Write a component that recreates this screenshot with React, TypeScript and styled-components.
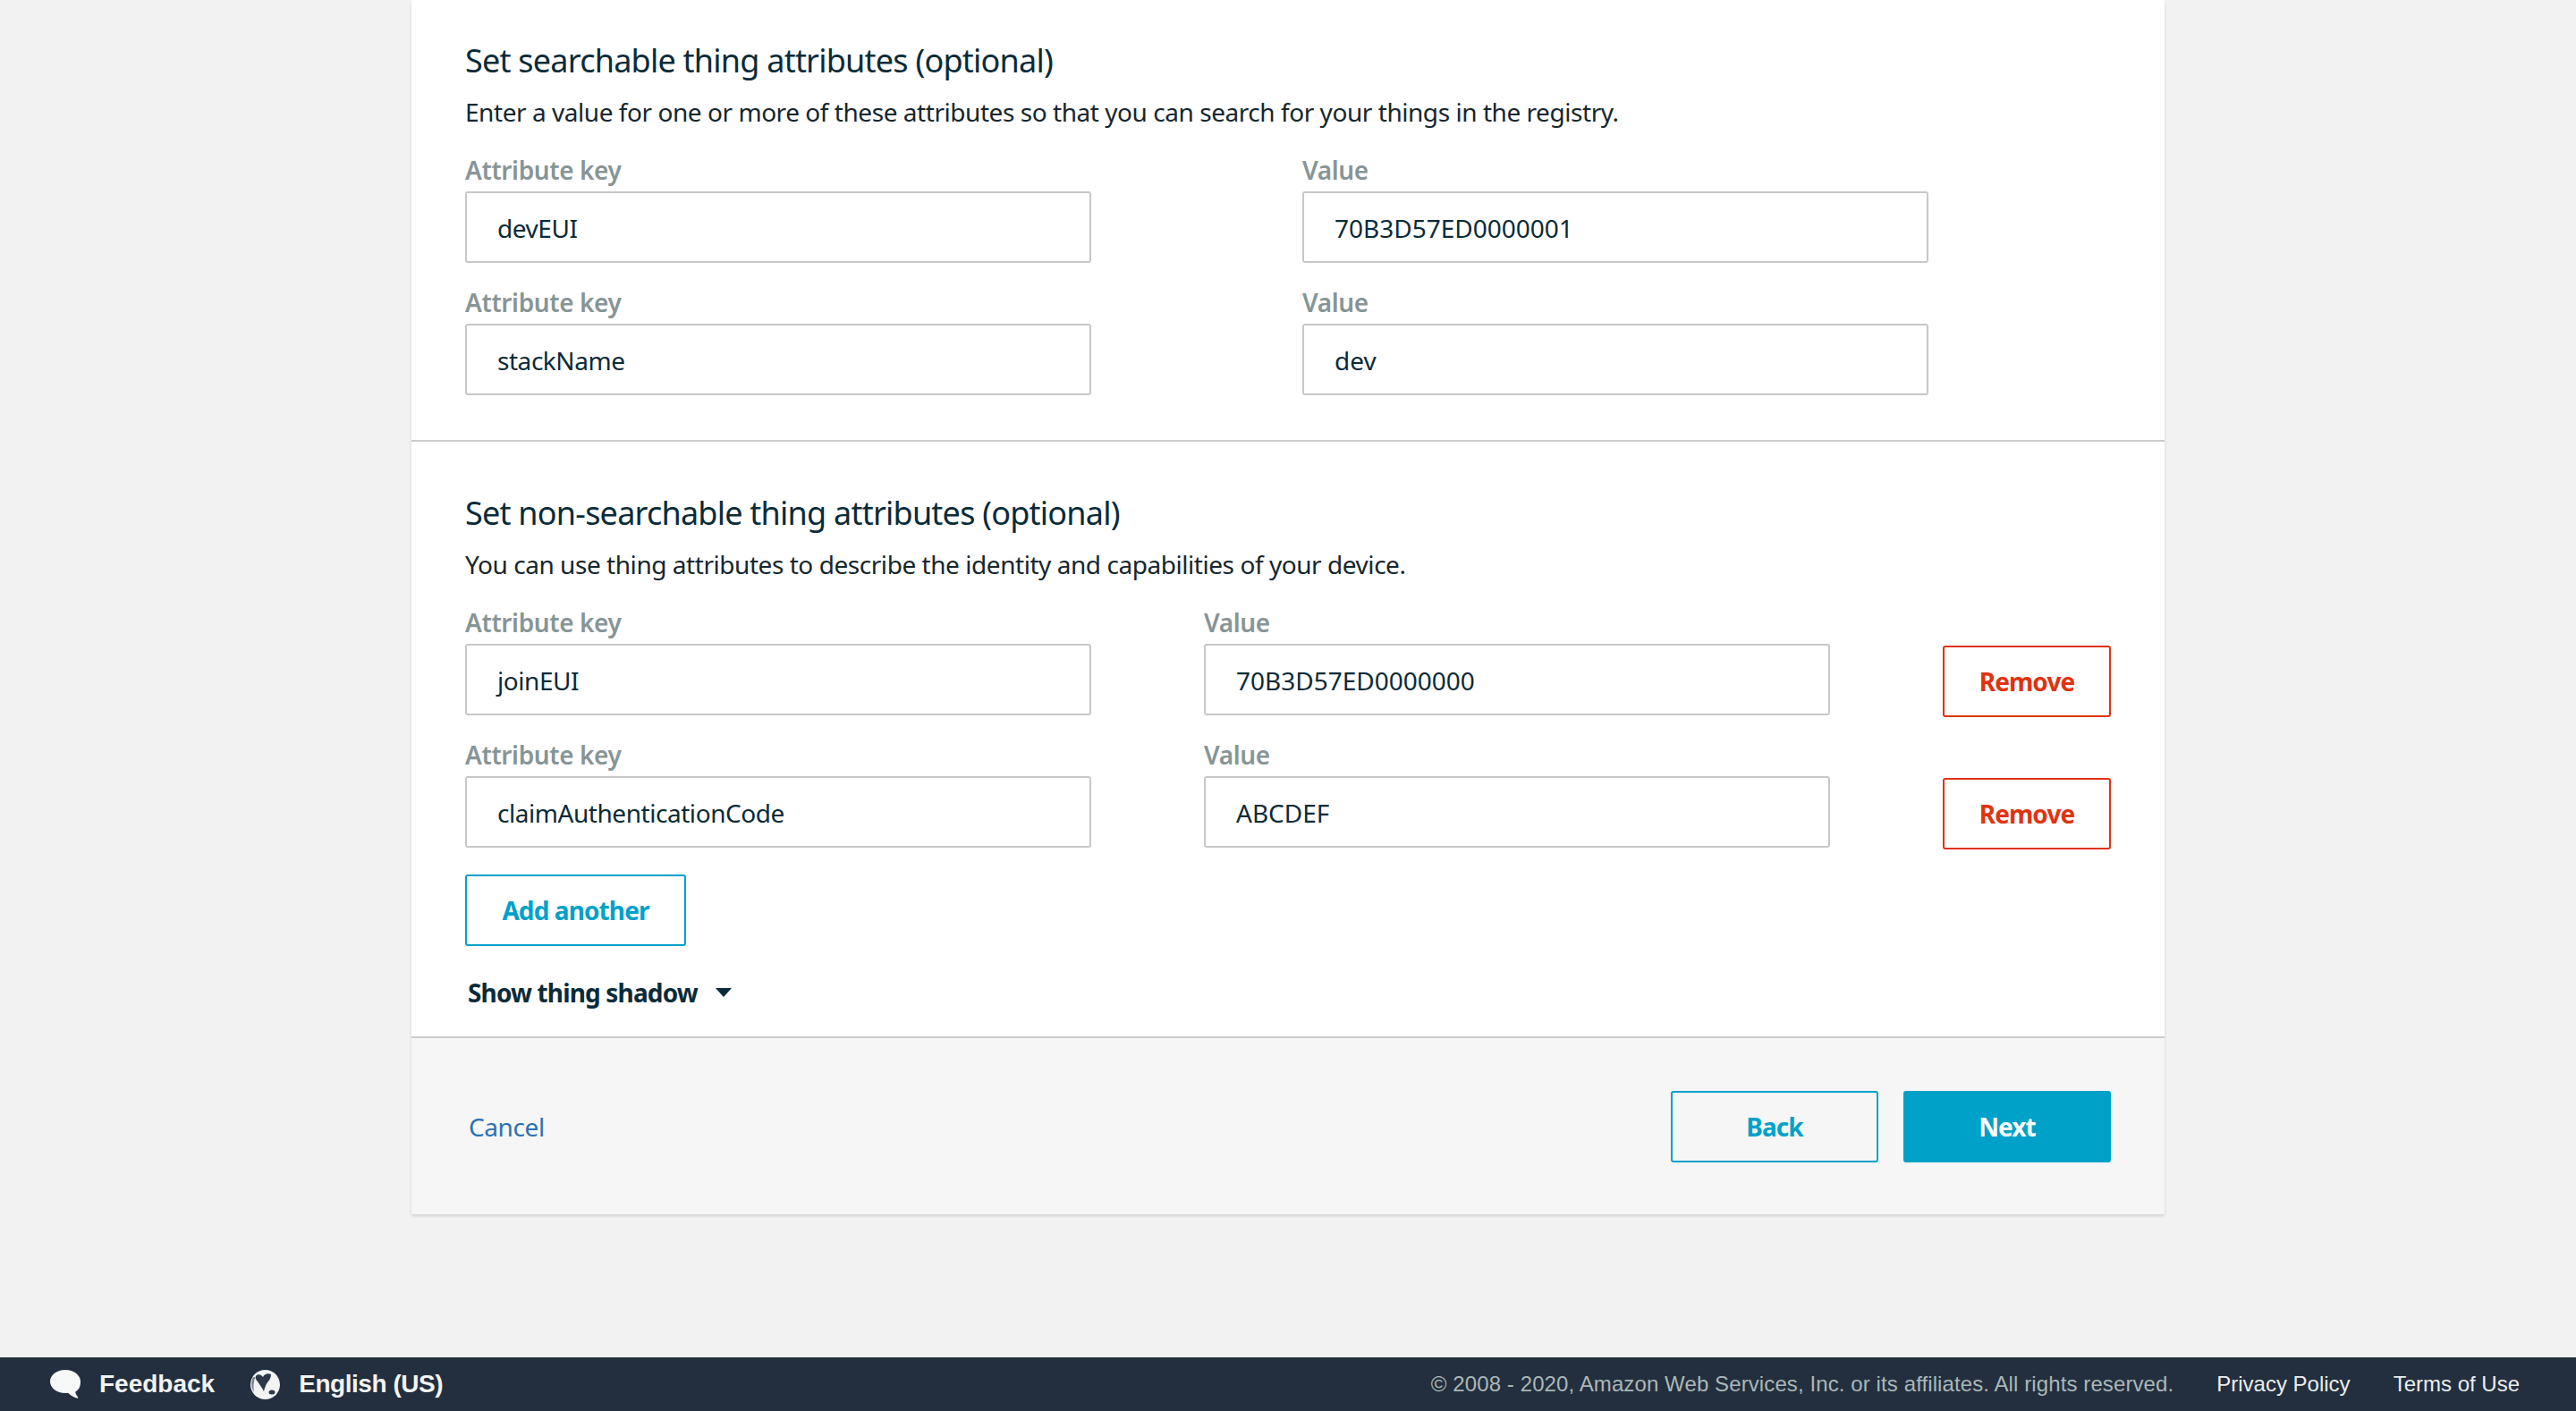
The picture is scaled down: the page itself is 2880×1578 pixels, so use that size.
import styled, { createGlobalStyle } from "styled-components";

const GlobalStyle = createGlobalStyle`
  html, body { margin: 0; padding: 0; background: #f2f2f2; }
  * { box-sizing: border-box; }
`;

const Page = styled.div`
  height: 1578px;
  display: flex;
  flex-direction: column;
  overflow: hidden;
  font-family: "Noto Sans", "Liberation Sans", sans-serif;
  color: #0b2b38;
`;

const Main = styled.main`
  flex: 1;
  display: flex;
  justify-content: center;
  align-items: flex-start;
`;

const Card = styled.div`
  width: 1960px;
  background: #fff;
  box-shadow: 0 2px 3px rgba(0, 28, 36, 0.15);
`;

const Section = styled.section<{ $top: number; $bottom: number }>`
  padding: ${(p) => p.$top}px 60px ${(p) => p.$bottom}px;
  border-bottom: 2px solid #ccc;
`;

const Heading = styled.h2`
  margin: 0;
  font-size: 36px;
  line-height: 46px;
  font-weight: 400;
  letter-spacing: -0.77px;
`;

const Description = styled.p`
  margin: 16px 0 0;
  font-size: 28px;
  line-height: 36px;
  letter-spacing: -0.45px;
  color: #16262e;
`;

const Rows = styled.div<{ $gap: number }>`
  margin-top: 27px;
  display: flex;
  flex-direction: column;
  gap: ${(p) => p.$gap}px;
`;

const Row = styled.div<{ $gap: number }>`
  display: flex;
  gap: ${(p) => p.$gap}px;
  align-items: flex-start;
`;

const FieldGroup = styled.div`
  width: 700px;
`;

const Label = styled.div`
  font-size: 28px;
  line-height: 40px;
  font-weight: 600;
  letter-spacing: -0.4px;
  color: #879596;
  margin-bottom: 4px;
`;

const Field = styled.div`
  height: 80px;
  border: 2px solid #c8c8c8;
  border-radius: 3px;
  background: #fff;
  padding: 2px 34px 0;
  display: flex;
  align-items: center;
  font-size: 28px;
  letter-spacing: -0.45px;
`;

const ValueField = styled(Field)`
  letter-spacing: 0;
`;

const Button = styled.button<{ $kind: "outline" | "danger" | "primary"; $width: number }>`
  width: ${(p) => p.$width}px;
  height: 80px;
  border-radius: 3px;
  border: 2px solid ${(p) => (p.$kind === "danger" ? "#df3312" : "#00a1c9")};
  background: ${(p) => (p.$kind === "primary" ? "#00a1c9" : "transparent")};
  color: ${(p) => (p.$kind === "danger" ? "#df3312" : p.$kind === "primary" ? "#fff" : "#00a1c9")};
  font-family: inherit;
  font-size: 28px;
  font-weight: 700;
  letter-spacing: -0.9px;
  padding: 0;
`;

const RemoveButton = styled(Button)`
  margin-top: 46px;
`;

const AddButton = styled(Button)`
  display: block;
  margin-top: 28px;
`;

const ShadowToggle = styled.div`
  margin-top: 32px;
  margin-left: 3px;
  display: flex;
  align-items: center;
  gap: 20px;
  font-size: 28px;
  line-height: 40px;
  font-weight: 700;
  letter-spacing: -0.85px;
`;

const Caret = styled.span`
  width: 0;
  height: 0;
  border-left: 9px solid transparent;
  border-right: 9px solid transparent;
  border-top: 10px solid #0b2b38;
`;

const CardFooter = styled.div`
  background: #f6f6f6;
  padding: 59px 60px 58px;
  display: flex;
  align-items: center;
  justify-content: space-between;
`;

const CancelLink = styled.a`
  margin-left: 4px;
  font-size: 28px;
  letter-spacing: -0.4px;
  color: #2a72b5;
`;

const Actions = styled.div`
  display: flex;
  gap: 28px;
`;

const BottomBar = styled.footer`
  height: 60px;
  flex-shrink: 0;
  background: #232f3e;
  padding: 0 63px 0 56px;
  display: flex;
  align-items: center;
  justify-content: space-between;
  font-family: "Liberation Sans", Arial, sans-serif;
`;

const BarGroup = styled.div<{ $gap: number }>`
  display: flex;
  align-items: center;
  gap: ${(p) => p.$gap}px;
`;

const BarItem = styled.div<{ $spacing?: number }>`
  display: flex;
  align-items: center;
  gap: 21px;
  font-size: 28px;
  font-weight: 700;
  letter-spacing: ${(p) => p.$spacing ?? 0}px;
  color: #f2f3f3;
`;

const Copyright = styled.span`
  font-size: 24px;
  letter-spacing: 0.1px;
  color: #aab7b8;
`;

const BarLink = styled.a`
  font-size: 24px;
  color: #eaeded;
`;

const BubbleIcon = () => (
  <svg width="34" height="33" viewBox="0 0 34 33">
    <path
      d="M17 0C7.500 0 0 5.800 0 13c0 7 7.500 13 17 13 1 0 2 0 3-.2 2.500 2.400 6 4.800 10.500 6 .8-.2 1-1 .5-1.600-1.400-1.400-2.400-3-2.800-5.600C33 21.800 34 17.800 34 13 34 5.800 26.500 0 17 0z"
      fill="#f7f8f8"
    />
  </svg>
);

const GlobeIcon = () => (
  <svg width="33" height="33" viewBox="0 0 33 33">
    <circle cx="16.5" cy="16.500" r="16.500" fill="#f2f3f3" />
    <path
      d="M6 7C8 4 12 5 14 8c1-3 6-5 9-3 0 4-2 7-4 9-2 3-3 6-4 10-2-4-5-8-7-11C6 11 5 9 6 7z"
      fill="#2b3848"
    />
    <ellipse cx="24" cy="25" rx="3.500" ry="2.500" fill="#2b3848" />
    <path d="M2.500 9C.5 14 .8 20 4 25c-.8-5-.8-11 1.200-16.500C4 7.800 3 8 2.500 9z" fill="#7b8590" />
  </svg>
);

const searchable = [
  { key: "devEUI", value: "70B3D57ED0000001" },
  { key: "stackName", value: "dev" },
];

const nonSearchable = [
  { key: "joinEUI", value: "70B3D57ED0000000" },
  { key: "claimAuthenticationCode", value: "ABCDEF" },
];

export default function App() {
  return (
    <Page>
      <GlobalStyle />
      <Main>
        <Card>
          <Section $top={45} $bottom={50}>
            <Heading>Set searchable thing attributes (optional)</Heading>
            <Description>
              Enter a value for one or more of these attributes so that you can search for your things in the registry.
            </Description>
            <Rows $gap={24}>
              {searchable.map((row) => (
                <Row $gap={236} key={row.key}>
                  <FieldGroup>
                    <Label>Attribute key</Label>
                    <Field>{row.key}</Field>
                  </FieldGroup>
                  <FieldGroup>
                    <Label>Value</Label>
                    <ValueField>{row.value}</ValueField>
                  </FieldGroup>
                </Row>
              ))}
            </Rows>
          </Section>
          <Section $top={57} $bottom={29}>
            <Heading>Set non-searchable thing attributes (optional)</Heading>
            <Description>
              You can use thing attributes to describe the identity and capabilities of your device.
            </Description>
            <Rows $gap={22}>
              {nonSearchable.map((row) => (
                <Row $gap={126} key={row.key}>
                  <FieldGroup>
                    <Label>Attribute key</Label>
                    <Field>{row.key}</Field>
                  </FieldGroup>
                  <FieldGroup>
                    <Label>Value</Label>
                    <ValueField>{row.value}</ValueField>
                  </FieldGroup>
                  <RemoveButton $kind="danger" $width={188}>
                    Remove
                  </RemoveButton>
                </Row>
              ))}
            </Rows>
            <AddButton $kind="outline" $width={247}>
              Add another
            </AddButton>
            <ShadowToggle>
              Show thing shadow
              <Caret />
            </ShadowToggle>
          </Section>
          <CardFooter>
            <CancelLink>Cancel</CancelLink>
            <Actions>
              <Button $kind="outline" $width={232}>
                Back
              </Button>
              <Button $kind="primary" $width={232}>
                Next
              </Button>
            </Actions>
          </CardFooter>
        </Card>
      </Main>
      <BottomBar>
        <BarGroup $gap={40}>
          <BarItem>
            <BubbleIcon />
            Feedback
          </BarItem>
          <BarItem $spacing={-0.45}>
            <GlobeIcon />
            English (US)
          </BarItem>
        </BarGroup>
        <BarGroup $gap={48}>
          <Copyright>© 2008 - 2020, Amazon Web Services, Inc. or its affiliates. All rights reserved.</Copyright>
          <BarLink>Privacy Policy</BarLink>
          <BarLink>Terms of Use</BarLink>
        </BarGroup>
      </BottomBar>
    </Page>
  );
}
